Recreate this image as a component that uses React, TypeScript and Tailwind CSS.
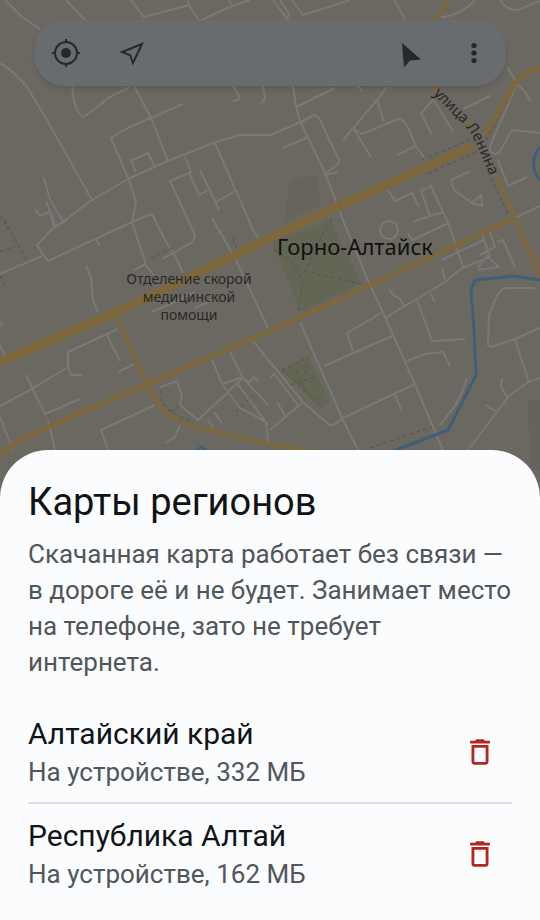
import React from "react";
import { MdDeleteOutline } from "react-icons/md";

const streets = [
  "M5 0L22 17L40 29",
  "M66 0L85 20",
  "M131 0L144 17L189 5L199 21M188 0L189 5",
  "M199 21L232 6L250 0M229 0L232 6",
  "M0 63Q14 71 27 87L44 115L92 200",
  "M72 85Q74 112 83 117Q92 112 108 98L130 87",
  "M134 86L151 118L168 161",
  "M183 104L151 118Q125 128 111 138L128 178",
  "M136 172L131 161L148 153L155 167",
  "M53 229L92 200L128 179L168 161L213 143L240 135L270 135L301 122L314 115Q319 116 321 122L339 160L338 164L324 175L338 172",
  "M233 86L239 96L238 100L233 101",
  "M263 86L265 98L262 103",
  "M44 177L50 200L63 221",
  "M35 209L40 216L50 212M46 201L50 211L54 228",
  "M129 180L136 202L132 222L146 265L155 277",
  "M215 143L253 230L258 238",
  "M185 156L191 172L170 181L188 220L195 235L193 242L162 259",
  "M189 173L199 195L208 190",
  "M200 170L219 210M216 202L235 191",
  "M212 218L236 260L268 328",
  "M52 214L55 227M134 221L152 214L165 240L177 260L183 273",
  "M67 220L54 227L37 245L42 253L48 261L134 221L113 231",
  "M0 274L42 256M96 238L99 246",
  "M86 266L91 277L93 300L98 312",
  "M134 270L146 264M152 312L174 302L195 292M195 308L215 299",
  "M118 329L68 352L68 367L71 375L82 375M107 335L120 361M118 372L134 364",
  "M0 406L30 390L68 367M26 375L45 414L80 399",
  "M155 405L101 430L108 450M0 417L13 450M48 420L55 450",
  "M160 387L177 381L182 395L180 405L198 420L243 378",
  "M212 360L222 384L240 408L266 422L268 442M230 352L243 378L268 405M222 384L240 378L250 382L254 377L259 382",
  "M236 382L268 425M180 425L175 437L165 443M208 420L213 428M214 412L222 423",
  "M253 341L270 362L303 402L328 424Q332 428 343 418",
  "M270 378L275 373M275 375L298 405M303 402L270 430M277 402L286 418",
  "M0 323L3 326M0 345L5 357",
  "M273 0L288 20M280 0L289 14L287 19",
  "M292 0L303 15L350 0M394 0L406 21",
  "M441 17Q460 16 475 0M500 0Q507 11 518 10L540 1",
  "M293 86L296 107L300 121L325 173L343 220L370 285L385 317L414 382L445 455M296 107L335 88",
  "M358 86L362 91M387 87L377 100L343 140M377 100L384 122",
  "M283 148L308 137",
  "M353 128L371 157M353 128L362 134L398 119Q404 119 408 128L416 146L426 160M416 146L397 155",
  "M433 99L453 131M433 100L421 113L432 135M463 109L490 96",
  "M508 68L517 84L490 146Q490 156 499 153L512 130L540 133M517 84L525 92L530 101",
  "M498 160L508 186L527 177M515 218L540 206",
  "M388 190L395 201L412 193L419 207",
  "M470 171L451 180L454 190L472 203L481 195L482 206L472 203",
  "M421 191L431 186L449 225L463 267M421 191L430 216L444 212M413 222L430 216",
  "M408 233L412 240L449 223",
  "M441 260L484 240L482 234M490 232L495 247L480 255",
  "M385 318L403 307L417 299L445 282L462 268L490 257L484 240",
  "M497 242L503 240L515 267M478 268L487 256L499 267L478 270",
  "M389 289L394 296Q402 297 404 307",
  "M442 268L445 280M430 293L435 302M417 300L432 341L465 339",
  "M535 288L505 288Q498 290 489 315L488 345L492 347L515 339L540 328M515 340L529 382",
  "M540 378L528 382L510 395L496 413L468 450M507 397L501 386L502 378M497 412L485 405",
  "M381 313L347 333L353 351M324 366L392 336",
  "M300 322L343 420L358 450M343 418L415 384M395 395L402 411",
  "M407 361L425 354L443 352L450 366M467 378Q462 395 454 407L440 425",
];

const footpaths = [
  "M0 215L9 230M4 220L28 262M0 252L15 246M0 275L6 288",
  "M298 311L303 280L290 260L270 248M362 284L305 271L328 222",
  "M282 370L308 357L305 375M282 370L321 405M296 370L306 392M290 385L318 376",
  "M370 448L432 427M236 412L256 392M150 258L175 247M233 238L237 250",
  "M160 390Q160 412 193 422M170 412L182 405",
  "M422 160L470 140M428 174L480 150M486 140L515 88M491 178L508 214M330 222L333 215",
];

function CityMap() {
  return (
    <svg
      className="absolute inset-x-0 top-0 h-[490px] w-full"
      viewBox="0 0 540 490"
      preserveAspectRatio="xMidYMin slice"
      fill="none"
      role="img"
      aria-label="Карта: Горно-Алтайск"
    >
      <defs>
        <path id="lenina" d="M433 94L464 125Q473 135 479 150L494 186" />
      </defs>
      <path d="M272 242L330 220L361 283L300 312L290 285Z" fill="#636655" />
      <path d="M282 370L308 358L330 402L320 408Z" fill="#626753" />
      <path d="M290 180L318 175L320 205L285 220Z" fill="#68645d" />
      <path d="M528 400H540V470H530Z" fill="#67635c" />
      <g stroke="#7b7975" strokeWidth="2" strokeLinejoin="round">
        {streets.map((d) => (
          <path key={d} d={d} />
        ))}
        <circle cx="389" cy="230" r="9" />
      </g>
      <g stroke="#55524d" strokeWidth="1" strokeDasharray="4 3">
        {footpaths.map((d) => (
          <path key={d} d={d} />
        ))}
      </g>
      <g stroke="#3f5f79" strokeWidth="3" strokeLinejoin="round">
        <path d="M540 280L514 276L475 280L471 291L474 330L476 375L466 395L448 430L430 437L390 452" />
        <path d="M540 147Q527 164 540 180" />
        <path d="M197 450L202 447L206 450" />
      </g>
      <g stroke="#7c683c" strokeLinejoin="round">
        <path d="M0 455L20 440L80 413L148 384L270 331L370 285L515 218" strokeWidth="5" />
        <path d="M115 314L148 385Q160 412 180 421L195 427L270 444L310 451" strokeWidth="4" />
        <path d="M448 0L446 5L430 28M433 86L438 92M468 120L471 126M497 178L515 218L540 277" strokeWidth="4" />
        <path d="M540 68Q520 74 513 87L484 137" strokeWidth="5" />
        <path d="M0 362L112 314L170 287L270 238L337 207L473 146" strokeWidth="9" />
      </g>
      <g className="font-['Noto_Sans',sans-serif]" fill="#292826" textAnchor="middle">
        <text x="355" y="255" fontSize="22" fill="#11110f">Горно-Алтайск</text>
        <g fontSize="14">
          <text x="189" y="284">Отделение скорой</text>
          <text x="189" y="302">медицинской</text>
          <text x="189" y="320">помощи</text>
        </g>
        <text fontSize="15" textAnchor="start">
          <textPath href="#lenina">улица Ленина</textPath>
        </text>
      </g>
    </svg>
  );
}

function ToolButton({ label, children }: { label: string; children: React.ReactNode }) {
  return (
    <button type="button" aria-label={label} className="flex size-12 items-center justify-center">
      <svg viewBox="0 0 32 32" className="size-8" fill="none" stroke="#25282c" strokeWidth="2">
        {children}
      </svg>
    </button>
  );
}

function Toolbar() {
  return (
    <header className="relative mx-[34px] mt-5 flex h-[66px] items-center justify-between rounded-[30px] bg-[#696c6f] px-2 shadow-md">
      <div className="flex gap-[18px]">
        <ToolButton label="Моё местоположение">
          <circle cx="16" cy="16" r="11" />
          <circle cx="16" cy="16" r="5" fill="#25282c" stroke="none" />
          <path d="M16 2v4M16 26v4M2 16h4M26 16h4" />
        </ToolButton>
        <ToolButton label="Маршрут">
          <path d="M26 7L6 15L14 18L17 26Z" />
        </ToolButton>
      </div>
      <div className="flex gap-4">
        <ToolButton label="Направление">
          <path d="M8 6L27 22.500L16 23.500L10 30.500Z" fill="#25282c" stroke="none" />
        </ToolButton>
        <ToolButton label="Меню">
          <g fill="#25282c" stroke="none">
            <circle cx="16" cy="8.500" r="2.600" />
            <circle cx="16" cy="16" r="2.600" />
            <circle cx="16" cy="23.500" r="2.600" />
          </g>
        </ToolButton>
      </div>
    </header>
  );
}

const regions = [
  { name: "Алтайский край", size: "332 МБ" },
  { name: "Республика Алтай", size: "162 МБ" },
];

export default function App() {
  return (
    <main className="relative flex min-h-screen flex-col overflow-hidden bg-[#6b6761] font-[Roboto,sans-serif]">
      <CityMap />
      <Toolbar />
      <section
        aria-labelledby="regions-title"
        className="relative mt-auto rounded-t-[48px] bg-[#fafcfe] px-7 pt-6 pb-4"
      >
        <h1 id="regions-title" className="text-[38px] leading-[56px] text-[#111416]">
          Карты регионов
        </h1>
        <p className="mt-1.5 text-[26px] leading-9 text-[#51565a]">
          Скачанная карта работает без связи —<br />в дороге её и не будет. Занимает место
          <br />на телефоне, зато не требует<br />интернета.
        </p>
        <ul className="mt-[22px] divide-y-2 divide-[#dcdee1]">
          {regions.map((region) => (
            <li key={region.name} className="flex items-center justify-between py-3">
              <div>
                <h2 className="text-[30px] leading-10 text-[#111416]">{region.name}</h2>
                <p className="text-[26px] leading-9 text-[#51565a]">На устройстве, {region.size}</p>
              </div>
              <button
                type="button"
                aria-label={`Удалить: ${region.name}`}
                className="flex size-16 items-center justify-center text-[#b3261e]"
              >
                <MdDeleteOutline className="size-[34px]" />
              </button>
            </li>
          ))}
        </ul>
      </section>
    </main>
  );
}
